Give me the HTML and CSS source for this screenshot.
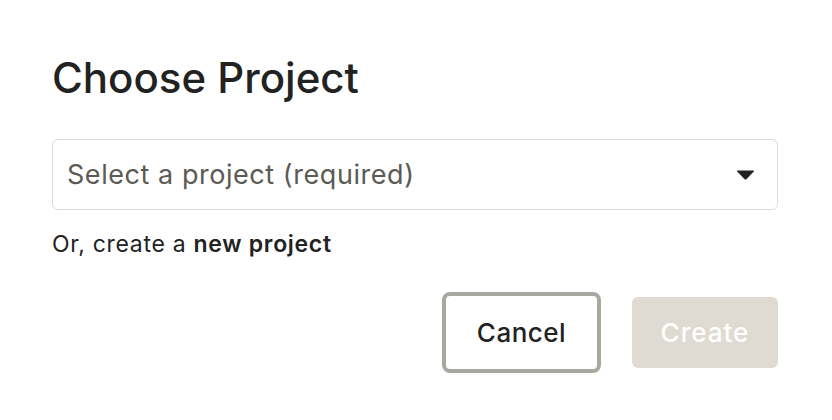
FILE: index.html
```html
<!DOCTYPE html>
<html lang="en">
<head>
    <meta charset="UTF-8" />
    <meta name="viewport" content="width=device-width, initial-scale=1" />
    <title>Choose Project</title>
    <link rel="stylesheet" href="styles.css">
</head>
<body>
    <div class="dialog">
        <h1 class="title">Choose Project</h1>

        <div class="select">
            <span class="placeholder">Select a project (required)</span>
            <svg class="caret" width="19" height="10" viewBox="0 0 19 10">
                <path d="M1.5 0.5 H17.5 Q18.6 0.5 17.8 1.4 L10.4 9.2 Q9.5 10 8.6 9.2 L1.2 1.4 Q0.4 0.5 1.5 0.5 Z" fill="#222" />
            </svg>
        </div>

        <p class="create-link">Or, create a <b>new project</b></p>

        <div class="actions">
            <button class="btn btn-cancel">Cancel</button>
            <button class="btn btn-create" disabled>Create</button>
        </div>
    </div>
</body>
</html>
```

FILE: styles.css
```css
body {
    margin: 0;
    background: #fff;
    font-family: Inter, "Liberation Sans", sans-serif;
    color: #222;
}

.dialog {
    width: 726px;
    padding: 52px 0 0 52px;
}

.title {
    margin: 0;
    font-size: 42px;
    font-weight: 500;
    line-height: 52px;
}

.select {
    margin-top: 35px;
    height: 69px;
    border: 1px solid #dedad2;
    border-radius: 6px;
    display: flex;
    align-items: center;
    justify-content: space-between;
    padding: 0 22px 0 14px;
}

.placeholder {
    font-size: 27px;
    color: #5b5a54;
    letter-spacing: 0.55px;
}

.create-link {
    margin: 21px 0 0;
    font-size: 23px;
    line-height: 26px;
    letter-spacing: 0.7px;
}

.create-link b {
    font-weight: 600;
}

.actions {
    margin-top: 35px;
    display: flex;
    justify-content: flex-end;
    align-items: center;
    gap: 31px;
}

.btn {
    font-family: inherit;
    font-size: 26px;
    font-weight: 500;
    letter-spacing: 0.5px;
    border-radius: 8px;
    cursor: pointer;
}

.btn-cancel {
    width: 159px;
    height: 81px;
    background: #fff;
    color: #222;
    border: 4px solid #a9a8a0;
}

.btn-create {
    width: 146px;
    height: 71px;
    background: #dfdbd2;
    color: #fff;
    border: none;
    border-radius: 6px;
    letter-spacing: 1px;
}
```
